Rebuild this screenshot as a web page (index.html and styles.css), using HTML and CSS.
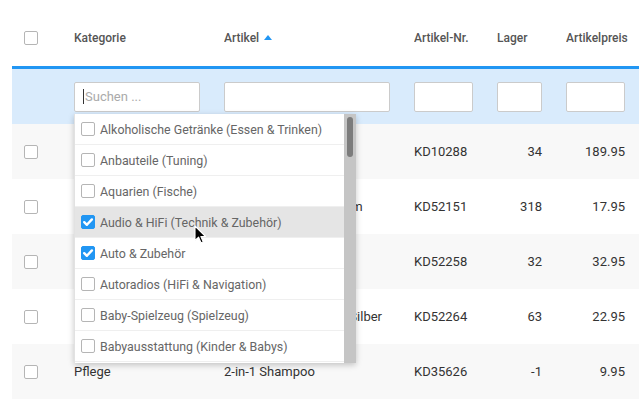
FILE: index.html
```html
<!DOCTYPE html>
<html lang="de">
<head>
<meta charset="utf-8">
<link rel="stylesheet" href="styles.css">
</head>
<body>
<div class="page">
  <div class="grid">
    <div class="row head">
      <div class="cell"><span class="cb"></span></div>
      <div class="cell">Kategorie</div>
      <div class="cell">Artikel <span class="sort"></span></div>
      <div class="cell">Artikel-Nr.</div>
      <div class="cell">Lager</div>
      <div class="cell">Artikelpreis</div>
    </div>
    <div class="row filter">
      <div class="cell"></div>
      <div class="cell"><div class="inp focus"><span class="caret"></span><span class="ph">Suchen ...</span></div></div>
      <div class="cell"><div class="inp"></div></div>
      <div class="cell"><div class="inp"></div></div>
      <div class="cell"><div class="inp"></div></div>
      <div class="cell"><div class="inp"></div></div>
    </div>
    <div class="row data alt">
      <div class="cell"><span class="cb"></span></div>
      <div class="cell">Autoradios</div>
      <div class="cell">Autoradio mit Navi</div>
      <div class="cell">KD10288</div>
      <div class="cell num">34</div>
      <div class="cell num">189.95</div>
    </div>
    <div class="row data">
      <div class="cell"><span class="cb"></span></div>
      <div class="cell">Audio &amp; HiFi</div>
      <div class="cell">Stereo Kopfhörer Bloom</div>
      <div class="cell">KD52151</div>
      <div class="cell num">318</div>
      <div class="cell num">17.95</div>
    </div>
    <div class="row data alt">
      <div class="cell"><span class="cb"></span></div>
      <div class="cell">Auto &amp; Zubehör</div>
      <div class="cell">Sitzbezug Set</div>
      <div class="cell">KD52258</div>
      <div class="cell num">32</div>
      <div class="cell num">32.95</div>
    </div>
    <div class="row data">
      <div class="cell"><span class="cb"></span></div>
      <div class="cell">Auto &amp; Zubehör</div>
      <div class="cell">Radkappe Set 16 Zoll Silber</div>
      <div class="cell">KD52264</div>
      <div class="cell num">63</div>
      <div class="cell num">22.95</div>
    </div>
    <div class="row data alt">
      <div class="cell"><span class="cb"></span></div>
      <div class="cell">Pflege</div>
      <div class="cell">2-in-1 Shampoo</div>
      <div class="cell">KD35626</div>
      <div class="cell num">-1</div>
      <div class="cell num">9.95</div>
    </div>
  </div>

  <div class="dropdown">
    <ul class="list">
      <li class="opt"><span class="cb"></span>Alkoholische Getränke (Essen &amp; Trinken)</li>
      <li class="opt"><span class="cb"></span>Anbauteile (Tuning)</li>
      <li class="opt"><span class="cb"></span>Aquarien (Fische)</li>
      <li class="opt hover"><span class="cb on"><svg viewBox="0 0 14 14" width="14" height="14"><path d="M3.2 7.2 L5.9 9.8 L10.9 4.4" fill="none" stroke="#fff" stroke-width="2.4" stroke-linecap="round" stroke-linejoin="round"/></svg></span>Audio &amp; HiFi (Technik &amp; Zubehör)</li>
      <li class="opt"><span class="cb on"><svg viewBox="0 0 14 14" width="14" height="14"><path d="M3.2 7.2 L5.9 9.8 L10.9 4.4" fill="none" stroke="#fff" stroke-width="2.4" stroke-linecap="round" stroke-linejoin="round"/></svg></span>Auto &amp; Zubehör</li>
      <li class="opt"><span class="cb"></span>Autoradios (HiFi &amp; Navigation)</li>
      <li class="opt"><span class="cb"></span>Baby-Spielzeug (Spielzeug)</li>
      <li class="opt"><span class="cb"></span>Babyausstattung (Kinder &amp; Babys)</li>
      <li class="opt"><span class="cb"></span>Backwaren (Essen &amp; Trinken)</li>
    </ul>
    <div class="scrollbar"><div class="thumb"></div></div>
  </div>

  <svg class="cursor" width="13" height="20" viewBox="0 0 13 20">
    <path d="M1 1 L1 15.5 L4.6 12.2 L7 17.8 L9.2 16.9 L6.9 11.5 L11.6 11.5 Z" fill="#000" stroke="#fff" stroke-width="1.1" stroke-linejoin="round"/>
  </svg>
</div>
</body>
</html>
```

FILE: styles.css
```css
html, body {
  margin: 0;
  padding: 0;
  background: #fff;
}
body {
  font-family: Roboto, "Liberation Sans", sans-serif;
  font-size: 13px;
  color: #333;
  width: 639px;
  height: 402px;
  overflow: hidden;
}
.page {
  position: relative;
  padding-left: 12px;
}
.row {
  display: grid;
  grid-template-columns: 62px 150px 190px 83px 69px 73px;
  align-items: center;
}
.cell {
  padding-right: 24px;
  white-space: nowrap;
  overflow: hidden;
  display: flex;
  align-items: center;
}
.cell:first-child {
  padding-left: 12px;
  padding-right: 0;
}
.cell:last-child {
  padding-right: 14px;
}
.num {
  justify-content: flex-end;
}
.head {
  box-sizing: border-box;
  padding-top: 10px;
  font-size: 12px;
  font-weight: 500;
  color: #555;
  border-bottom: 3px solid #2196f3;
  height: 69px;
}
.sort {
  display: inline-block;
  width: 0;
  height: 0;
  margin-left: 5px;
  margin-top: -1px;
  border-left: 4.5px solid transparent;
  border-right: 4.5px solid transparent;
  border-bottom: 5px solid #2196f3;
}
.filter {
  height: 55px;
  background: #d9ebfc;
}
.inp {
  width: 100%;
  height: 30px;
  box-sizing: border-box;
  background: #fff;
  border: 1px solid #cbcbcb;
  border-radius: 2px;
  display: flex;
  align-items: center;
  padding-left: 8px;
  font-size: 13px;
}
.caret {
  width: 1px;
  height: 15px;
  background: #333;
  margin-right: 1px;
}
.ph {
  color: #aaa;
}
.data {
  height: 55px;
  color: #333;
}
.data.alt {
  background: #f8f8f8;
}
.cb {
  display: inline-block;
  width: 14px;
  height: 14px;
  box-sizing: border-box;
  border: 1px solid #b5b5b5;
  border-radius: 2px;
  background: #fff;
  flex: none;
}
.cb.on {
  background: #2196f3;
  border-color: #2196f3;
  position: relative;
}
.cb.on svg {
  position: absolute;
  left: -1px;
  top: -1px;
}

.dropdown {
  position: absolute;
  left: 74px;
  top: 114px;
  width: 282px;
  height: 249px;
  background: #fff;
  box-shadow: 0 2px 6px rgba(0, 0, 0, 0.22);
  border-left: 1px solid #e2e2e2;
  box-sizing: border-box;
  display: flex;
  overflow: hidden;
}
.list {
  list-style: none;
  margin: 0;
  padding: 0;
  flex: 1;
  overflow: hidden;
}
.opt {
  height: 31px;
  box-sizing: border-box;
  border-bottom: 1px solid #efefef;
  display: flex;
  align-items: center;
  gap: 5px;
  padding-left: 6px;
  color: #666;
  font-size: 12.4px;
  white-space: nowrap;
}
.opt.hover {
  background: #e5e5e5;
}
.scrollbar {
  width: 12px;
  flex: none;
  background: #c5c5c5;
  position: relative;
}
.thumb {
  position: absolute;
  left: 3px;
  top: 3px;
  width: 6px;
  height: 40px;
  border-radius: 3px;
  background: #7c7c7c;
}
.cursor {
  position: absolute;
  left: 194px;
  top: 225px;
}
```
